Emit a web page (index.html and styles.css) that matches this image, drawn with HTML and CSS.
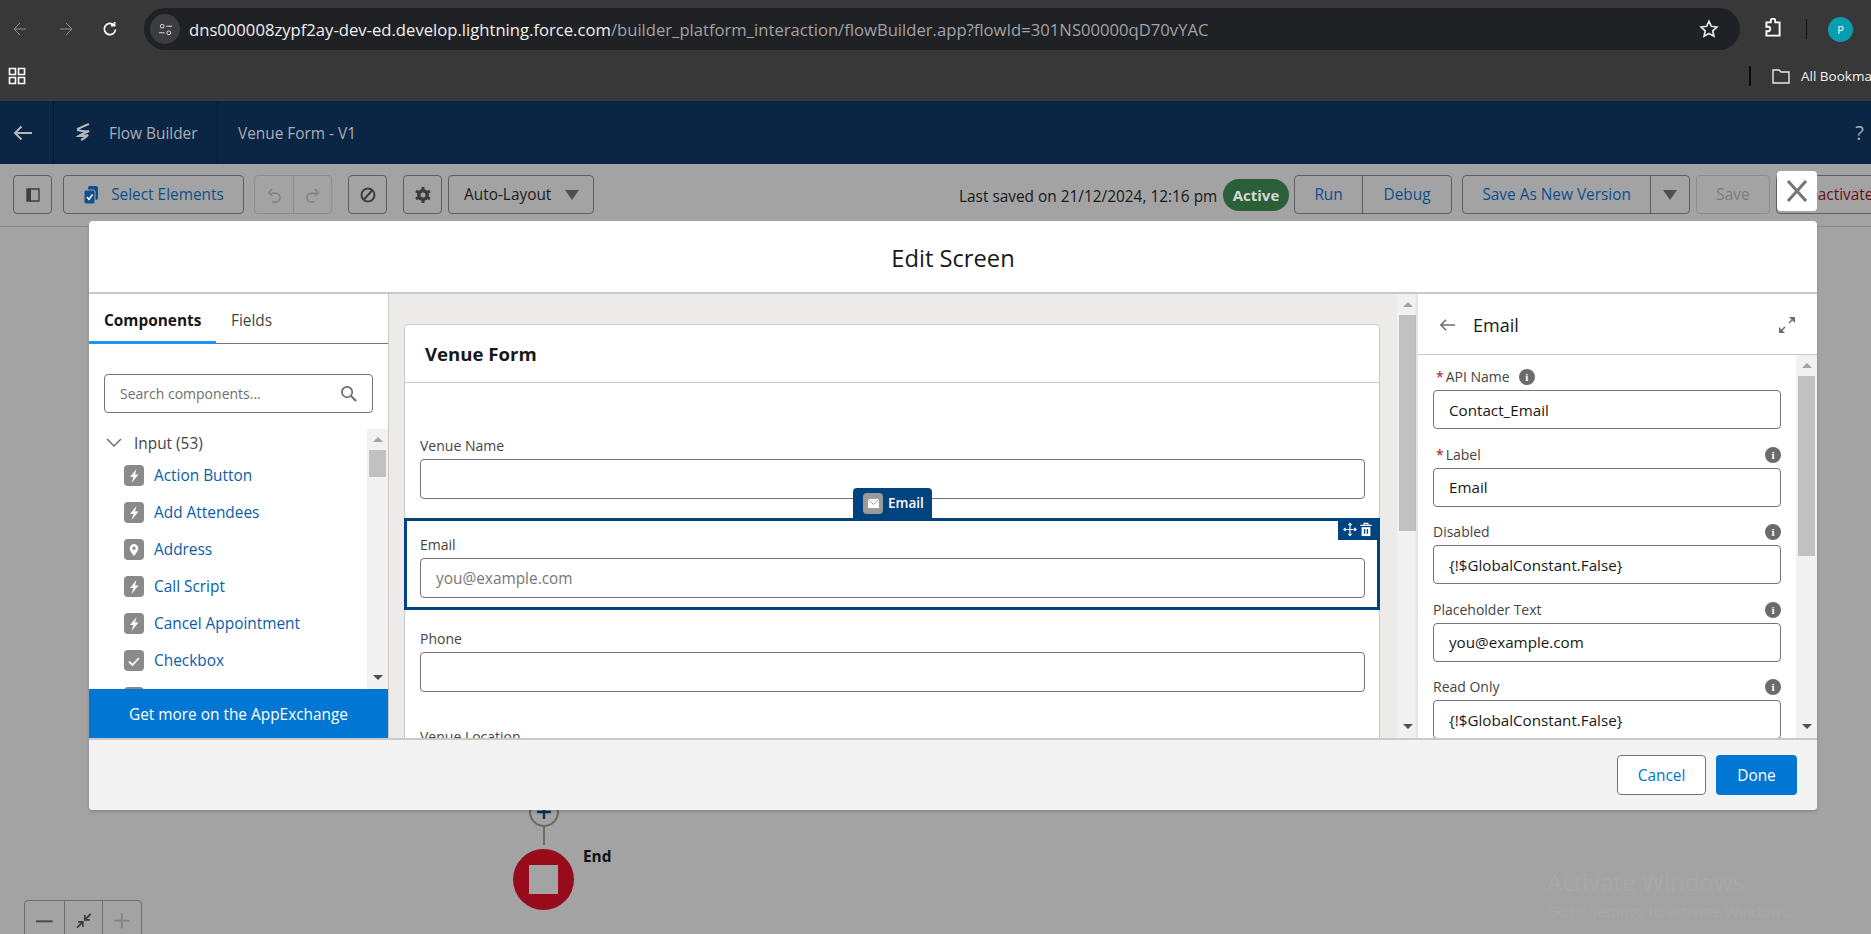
FILE: index.html
```html
<!DOCTYPE html>
<html lang="en">
<head>
    <meta charset="UTF-8">
    <title>Flow Builder - Venue Form</title>
    <link rel="stylesheet" href="styles.css">
</head>
<body>
    <!-- browser chrome -->
    <div class="chrome">
        <div class="address-row">
            <svg class="nav-arrow" viewBox="0 0 16 16"><path d="M14 8H2M8 2 2 8l6 6" stroke="#8f8f8f"/></svg>
            <svg class="nav-arrow forward" viewBox="0 0 16 16"><path d="M2 8h12M8 2l6 6-6 6" stroke="#8f8f8f"/></svg>
            <svg class="nav-arrow reload" viewBox="0 0 16 16"><path d="M13.5 8.5A5.6 5.6 0 1 1 12 4.2M12.6 1v3.6H9" stroke="#fff" stroke-width="1.7"/></svg>
            <div class="address-bar">
                <span class="site-icon">
                    <svg viewBox="0 0 16 16"><circle cx="4.5" cy="4.5" r="2" stroke="#e8e8e8"/><path d="M9 4.5h6M1 11.5h6" stroke="#e8e8e8"/><circle cx="11.5" cy="11.5" r="2" stroke="#e8e8e8"/></svg>
                </span>
                <span class="url"><span class="url-host">dns000008zypf2ay-dev-ed.develop.lightning.force.com</span>/builder_platform_interaction/flowBuilder.app?flowId=301NS00000qD70vYAC</span>
                <svg class="star" viewBox="0 0 18 18"><path d="M9 2l2.100 4.600 5 .6-3.700 3.400 1 4.900L9 13l-4.400 2.500 1-4.900L1.900 7.200l5-.6z" stroke="#e8e8e8" stroke-width="1.500"/></svg>
            </div>
            <svg class="ext-icon" viewBox="0 0 20 20"><path d="M4 4h4V2.500a2 2 0 0 1 4 0V4h4v12H4v-4h1.500a2 2 0 0 0 0-4H4z" stroke="#fff" stroke-width="1.700"/></svg>
            <span class="chrome-sep"></span>
            <span class="avatar">P</span>
        </div>
        <div class="bookmark-row">
            <svg class="apps" viewBox="0 0 18 18"><path d="M1.500 1.500h6v6h-6zM10.500 1.500h6v6h-6zM1.500 10.500h6v6h-6zM10.500 10.500h6v6h-6z" stroke="#fff" stroke-width="1.600"/></svg>
            <span class="bookmark-sep"></span>
            <svg class="folder" viewBox="0 0 20 18"><path d="M2 3h6l2 2h8v11H2z" stroke="#e8e8e8" stroke-width="1.400"/></svg>
            <span class="bookmark-text">All Bookmarks</span>
        </div>
    </div>

    <!-- salesforce header -->
    <div class="app-header">
        <div class="back-cell">
            <svg viewBox="0 0 20 16"><path d="M19 8H2M8.500 1.500 2 8l6.500 6.500" stroke="#b4b8bd" stroke-width="2"/></svg>
        </div>
        <div class="app-cell">
            <svg viewBox="0 0 20 22"><path d="M3 7c4-1 6-3 12-5M3 8c4 1 8 2 12 1-4 2-7 3-10 5 4 0 6 0 9-1-2 2-4 4-7 5" stroke="#b4b8bd" stroke-width="2.200"/></svg>
            <span>Flow Builder</span>
        </div>
        <div class="flow-name">Venue Form - V1</div>
        <div class="help">?</div>
    </div>

    <!-- builder toolbar -->
    <div class="toolbar">
        <button class="tool-btn panel-btn"><svg viewBox="0 0 14 14"><path d="M1 1h12v12H1z" stroke="#3d3d3d" stroke-width="1.400"/><path d="M1 1h4v12H1z" fill="#3d3d3d" stroke="none"/></svg></button>
        <button class="tool-btn select-btn">
            <svg viewBox="0 0 16 20"><rect x="5" y="1" width="10" height="14" rx="2" fill="#0e4f8d" stroke="none"/><rect x="1" y="5" width="11" height="14" rx="2" fill="#0e4f8d" stroke="#a3a3a3"/><path d="M4 12l2 2.500 3.500-5" stroke="#fff" stroke-width="1.500"/></svg>
            Select Elements
        </button>
        <div class="btn-group undo-group">
            <button><svg viewBox="0 0 16 20"><path d="M5 8h5a4.500 4.500 0 0 1 0 10H6M6 3 2 7.500 6 11" stroke="#7f7f7f" stroke-width="1.600"/></svg></button>
            <button><svg viewBox="0 0 16 20"><path d="M11 8H6a4.500 4.500 0 0 0 0 10h4M10 3l4 4.500L10 11" stroke="#7f7f7f" stroke-width="1.600"/></svg></button>
        </div>
        <button class="tool-btn stop-btn"><svg viewBox="0 0 18 18"><circle cx="9" cy="9" r="6.500" stroke="#3d3d3d" stroke-width="2"/><path d="M4.500 14 13.500 4" stroke="#3d3d3d" stroke-width="2"/></svg></button>
        <button class="tool-btn gear-btn"><svg viewBox="0 0 18 18"><path d="M9 1v16M2 5l14 8M2 13 16 5" stroke="#3d3d3d" stroke-width="3"/><circle cx="9" cy="9" r="6" fill="#3d3d3d" stroke="none"/><circle cx="9" cy="9" r="2.500" fill="#a3a3a3" stroke="none"/></svg></button>
        <div class="layout-select">Auto-Layout <span class="caret"></span></div>
        <div class="toolbar-right">
            <span class="saved">Last saved on 21/12/2024, 12:16 pm</span>
            <span class="active-pill">Active</span>
            <div class="btn-group run-group">
                <button class="run">Run</button>
                <button class="debug">Debug</button>
            </div>
            <div class="btn-group save-group">
                <button class="save-new">Save As New Version</button>
                <button class="save-caret"><span class="caret"></span></button>
            </div>
            <button class="save-btn">Save</button>
            <button class="deactivate-btn">Deactivate</button>
        </div>
    </div>

    <!-- flow canvas behind the modal -->
    <div class="canvas">
        <div class="add-node"><svg viewBox="0 0 16 16"><path d="M8 1v14M1 8h14" stroke="#0b3260" stroke-width="2.400"/></svg></div>
        <div class="node-line"></div>
        <div class="end-node"><span></span></div>
        <div class="end-label">End</div>
        <div class="zoom-controls">
            <span><svg viewBox="0 0 16 16"><path d="M0 8h16" stroke="#4d4d4d" stroke-width="2"/></svg></span>
            <span><svg viewBox="0 0 16 16"><path d="M1 15l5-5M2 9h5v5M15 1l-5 5M14 7H9V2" stroke="#3d3d3d" stroke-width="1.800"/></svg></span>
            <span><svg viewBox="0 0 16 16"><path d="M8 0v16M0 8h16" stroke="#868686" stroke-width="2"/></svg></span>
        </div>
        <div class="watermark">
            <div class="wm-title">Activate Windows</div>
            <div class="wm-sub">Go to Settings to activate Windows.</div>
        </div>
    </div>

    <button class="modal-close"><svg viewBox="0 0 24 24"><path d="M3 2l18 20M21 2 3 22" stroke="#747474" stroke-width="3"/></svg></button>

    <!-- edit screen modal -->
    <div class="modal">
        <div class="modal-header">Edit Screen</div>
        <div class="modal-body">

            <div class="left-panel">
                <div class="tabs">
                    <div class="tab active">Components</div>
                    <div class="tab">Fields</div>
                </div>
                <div class="search">
                    <span>Search components...</span>
                    <svg viewBox="0 0 18 18"><circle cx="7.500" cy="7.500" r="5.500" stroke="#6b6b6b" stroke-width="1.800"/><path d="M11.500 11.500 17 17" stroke="#6b6b6b" stroke-width="2.200"/></svg>
                </div>
                <div class="tree">
                    <div class="tree-list">
                        <div class="tree-head">
                            <svg viewBox="0 0 16 10"><path d="M1 1l7 7 7-7" stroke="#706e6b" stroke-width="1.500"/></svg>
                            Input (53)
                        </div>
                        <div class="tree-item"><span class="c-icon"><svg viewBox="0 0 12 14"><path d="M8.500 0 2 8h3.500L3.500 14 10.500 5.500H7z" fill="#fff" stroke="none"/></svg></span>Action Button</div>
                        <div class="tree-item"><span class="c-icon"><svg viewBox="0 0 12 14"><path d="M8.500 0 2 8h3.500L3.500 14 10.500 5.500H7z" fill="#fff" stroke="none"/></svg></span>Add Attendees</div>
                        <div class="tree-item"><span class="c-icon"><svg viewBox="0 0 12 14"><path d="M6 1a4.300 4.300 0 0 0-4.300 4.300C1.700 8.500 6 13 6 13s4.300-4.500 4.300-7.700A4.300 4.300 0 0 0 6 1zm0 6a1.700 1.700 0 1 1 0-3.400A1.700 1.700 0 0 1 6 7z" fill="#fff" stroke="none"/></svg></span>Address</div>
                        <div class="tree-item"><span class="c-icon"><svg viewBox="0 0 12 14"><path d="M8.500 0 2 8h3.500L3.500 14 10.500 5.500H7z" fill="#fff" stroke="none"/></svg></span>Call Script</div>
                        <div class="tree-item"><span class="c-icon"><svg viewBox="0 0 12 14"><path d="M8.500 0 2 8h3.500L3.500 14 10.500 5.500H7z" fill="#fff" stroke="none"/></svg></span>Cancel Appointment</div>
                        <div class="tree-item"><span class="c-icon"><svg viewBox="0 0 12 14"><path d="M1 7.500l3.500 3.500L11 4" stroke="#fff" stroke-width="1.800"/></svg></span>Checkbox</div>
                        <div class="tree-item"><span class="c-icon"></span></div>
                    </div>
                    <div class="scrollbar">
                        <span class="arrow up"></span>
                        <span class="thumb tree-thumb"></span>
                        <span class="arrow down"></span>
                    </div>
                </div>
                <div class="appexchange">Get more on the AppExchange</div>
            </div>

            <div class="center-panel">
                <div class="center-scroll">
                    <div class="form-card">
                        <div class="card-title">Venue Form</div>
                        <div class="card-fields">
                            <div class="screen-field first">
                                <label>Venue Name</label>
                                <input type="text">
                            </div>
                            <div class="screen-field selected">
                                <div class="field-badge">
                                    <span class="badge-icon"><svg viewBox="0 0 14 12"><path d="M1 1h12v10H1z" fill="#fff" stroke="none"/><path d="M1 1.500l6 5.500 6-5.500" stroke="#9a9a9a"/></svg></span>
                                    Email
                                </div>
                                <div class="field-actions">
                                    <svg viewBox="0 0 16 16"><path d="M8 1v14M1 8h14M6.300 3 8 1l1.700 2M6.300 13 8 15l1.700-2M3 6.300 1 8l2 1.700M13 6.300 15 8l-2 1.700" stroke="#fff" stroke-width="1.300"/></svg>
                                    <svg viewBox="0 0 14 16"><path d="M1 3.500h12M5 3.500V1.500h4v2" stroke="#fff" stroke-width="1.300"/><path d="M2.300 5.500h9.400V15H2.300z" fill="#fff" stroke="none"/><path d="M5.500 7.500v5M8.500 7.500v5" stroke="#00437f" stroke-width="1.400"/></svg>
                                </div>
                                <label>Email</label>
                                <input type="text" placeholder="you@example.com">
                            </div>
                            <div class="screen-field">
                                <label>Phone</label>
                                <input type="text">
                            </div>
                            <div class="screen-field last">
                                <label>Venue Location</label>
                            </div>
                        </div>
                    </div>
                </div>
                <div class="scrollbar">
                    <span class="arrow up"></span>
                    <span class="thumb center-thumb"></span>
                    <span class="arrow down"></span>
                </div>
            </div>

            <div class="right-panel">
                <div class="prop-header">
                    <svg class="prop-back" viewBox="0 0 18 14"><path d="M17 7H2M7.500 1.500 2 7l5.500 5.500" stroke="#706e6b" stroke-width="1.700"/></svg>
                    <span>Email</span>
                    <svg class="prop-expand" viewBox="0 0 18 18"><path d="M2 16l5-5M11 7l5-5" stroke="#706e6b" stroke-width="1.500"/><path d="M11 1h6v6zM1 11v6h6z" fill="#706e6b" stroke="none"/></svg>
                </div>
                <div class="prop-body">
                    <div class="prop-fields">
                        <div class="prop-field">
                            <div class="prop-label"><abbr>*</abbr>API Name <span class="info near">i</span></div>
                            <input type="text" value="Contact_Email">
                        </div>
                        <div class="prop-field">
                            <div class="prop-label"><abbr>*</abbr>Label <span class="info">i</span></div>
                            <input type="text" value="Email">
                        </div>
                        <div class="prop-field">
                            <div class="prop-label">Disabled <span class="info">i</span></div>
                            <input type="text" value="{!$GlobalConstant.False}">
                        </div>
                        <div class="prop-field">
                            <div class="prop-label">Placeholder Text <span class="info">i</span></div>
                            <input type="text" value="you@example.com">
                        </div>
                        <div class="prop-field">
                            <div class="prop-label">Read Only <span class="info">i</span></div>
                            <input type="text" value="{!$GlobalConstant.False}">
                        </div>
                    </div>
                    <div class="scrollbar">
                        <span class="arrow up"></span>
                        <span class="thumb prop-thumb"></span>
                        <span class="arrow down"></span>
                    </div>
                </div>
            </div>
        </div>
        <div class="modal-footer">
            <button class="cancel">Cancel</button>
            <button class="done">Done</button>
        </div>
    </div>
</body>
</html>
```

FILE: styles.css
```css
* {
    box-sizing: border-box;
}
html, body {
    margin: 0;
    padding: 0;
}
body {
    width: 1871px;
    height: 934px;
    overflow: hidden;
    position: relative;
    background-color: #a3a3a3;
    font-family: "Open Sans", "Noto Sans", sans-serif;
    font-size: 15.4px;
    color: #181818;
}
svg {
    display: block;
    fill: none;
    flex: none;
}
button {
    font-family: inherit;
    font-size: 15.4px;
    background: none;
    cursor: pointer;
    padding: 0;
}
input {
    font-family: inherit;
    outline: none;
}

/* browser chrome */
.chrome {
    height: 101px;
    background-color: #383838;
}
.address-row {
    height: 58px;
    padding: 8px 0 0 12px;
    display: flex;
    align-items: flex-start;
}
.nav-arrow {
    width: 16px;
    height: 16px;
    margin: 13px 30px 0 0;
}
.forward {
    margin-right: 28px;
}
.reload {
    margin-right: 26px;
}
.address-bar {
    width: 1596px;
    height: 42px;
    background-color: #202124;
    border-radius: 21px;
    display: flex;
    align-items: center;
    padding: 0 21px 0 6px;
}
.site-icon {
    width: 30px;
    height: 30px;
    border-radius: 50%;
    background-color: #3c3d40;
    display: flex;
    align-items: center;
    justify-content: center;
    margin-right: 9px;
}
.site-icon svg {
    width: 15px;
    height: 15px;
}
.url {
    flex: 1;
    font-size: 16.65px;
    color: #a0a2a6;
    white-space: nowrap;
}
.url-host {
    color: #f0f0f0;
}
.star {
    width: 20px;
    height: 20px;
}
.ext-icon {
    width: 22px;
    height: 22px;
    margin: 10px 0 0 22px;
}
.chrome-sep {
    width: 1px;
    height: 20px;
    background-color: #111;
    margin: 11px 21px 0 22px;
}
.avatar {
    width: 25px;
    height: 25px;
    border-radius: 50%;
    background-color: #0a9cb0;
    color: #fff;
    font-size: 11px;
    text-align: center;
    line-height: 25px;
    margin-top: 9px;
}
.bookmark-row {
    height: 43px;
    display: flex;
    align-items: center;
    padding-left: 8px;
    white-space: nowrap;
}
.apps {
    width: 18px;
    height: 18px;
    margin-top: -8px;
}
.bookmark-sep {
    flex: none;
    width: 2px;
    height: 20px;
    background-color: #0c0c0c;
    margin: -8px 0 0 1723px;
}
.folder {
    width: 20px;
    height: 18px;
    margin: -8px 0 0 20px;
}
.bookmark-text {
    flex: none;
    color: #f0f0f0;
    font-size: 13.5px;
    margin: -8px 0 0 10px;
}

/* app header */
.app-header {
    height: 63px;
    background-color: #0b2545;
    color: #a9afb7;
    display: flex;
    align-items: center;
}
.back-cell {
    width: 54px;
    height: 100%;
    border-right: 1px solid #071a33;
    padding: 0 0 0 13px;
    display: flex;
    align-items: center;
}
.back-cell svg {
    width: 20px;
    height: 16px;
}
.app-cell {
    width: 164px;
    height: 100%;
    border-right: 1px solid #071a33;
    display: flex;
    align-items: center;
    padding: 1px 0 0 20px;
    gap: 15px;
}
.app-cell svg {
    width: 20px;
    height: 22px;
}
.flow-name {
    margin: 2px 0 0 20px;
    flex: 1;
}
.help {
    font-size: 20px;
    margin-right: 7px;
}

/* toolbar */
.toolbar {
    height: 63px;
    border-bottom: 1px solid #8a8a8a;
    padding: 11px 0 0 13px;
    display: flex;
    align-items: flex-start;
    white-space: nowrap;
}
.toolbar > * {
    flex: none;
}
.tool-btn {
    width: 39px;
    height: 39px;
    border: 1px solid #5f5f5f;
    border-radius: 4px;
    display: flex;
    align-items: center;
    justify-content: center;
}
.panel-btn svg {
    width: 14px;
    height: 14px;
}
.select-btn {
    width: 181px;
    margin-left: 11px;
    gap: 12px;
    color: #0e4f8d;
}
.select-btn svg {
    width: 16px;
    height: 20px;
}
.btn-group {
    display: flex;
    height: 39px;
    border: 1px solid #5f5f5f;
    border-radius: 4px;
}
.btn-group button {
    border: none;
    border-left: 1px solid #5f5f5f;
    height: 37px;
    color: #0e4f8d;
}
.btn-group button:first-child {
    border-left: none;
}
.undo-group {
    margin-left: 10px;
    width: 78px;
    border-color: #8c8c8c;
}
.undo-group button {
    width: 50%;
    border-color: #8c8c8c;
    display: flex;
    align-items: center;
    justify-content: center;
}
.undo-group svg {
    width: 14px;
    height: 18px;
}
.stop-btn {
    margin-left: 16px;
}
.stop-btn svg, .gear-btn svg {
    width: 18px;
    height: 18px;
}
.gear-btn {
    margin-left: 16px;
}
.layout-select {
    margin-left: 6px;
    width: 146px;
    height: 39px;
    border: 1px solid #5f5f5f;
    border-radius: 4px;
    padding-left: 15px;
    display: flex;
    align-items: center;
    gap: 14px;
    color: #1c1c1c;
}
.caret {
    width: 0;
    height: 0;
    border-left: 7px solid transparent;
    border-right: 7px solid transparent;
    border-top: 10px solid #4f4f4f;
    display: inline-block;
}
.toolbar-right {
    margin-left: 365px;
    display: flex;
    align-items: flex-start;
}
.toolbar-right > * {
    flex: none;
}
.saved {
    line-height: 44px;
    width: 264px;
}
.active-pill {
    width: 66px;
    height: 32px;
    margin-top: 4px;
    border-radius: 16px;
    background-color: #2a5f38;
    color: #d4d8d4;
    font-weight: 700;
    font-size: 15px;
    text-align: center;
    line-height: 32px;
}
.run-group {
    margin-left: 5px;
    width: 158px;
}
.run {
    width: 68px;
}
.debug {
    width: 90px;
}
.save-group {
    margin-left: 10px;
    width: 228px;
}
.save-new {
    width: 189px;
}
.save-caret {
    width: 39px;
    display: flex;
    align-items: center;
    justify-content: center;
}
.save-btn {
    margin-left: 6px;
    width: 74px;
    height: 39px;
    border: 1px solid #8c8c8c;
    border-radius: 4px;
    color: #7c7c7c;
}
.deactivate-btn {
    margin-left: 6px;
    width: 130px;
    height: 39px;
    border: 1px solid #5f5f5f;
    border-radius: 4px;
    color: #6b0f14;
    text-align: left;
    padding-left: 21px;
}

/* canvas, free placed nodes */
.canvas {
    position: relative;
    height: 707px;
}
.add-node {
    position: absolute;
    left: 529px;
    top: 570px;
    width: 30px;
    height: 30px;
    border-radius: 50%;
    border: 2px solid #666;
    display: flex;
    align-items: center;
    justify-content: center;
}
.add-node svg {
    width: 16px;
    height: 16px;
}
.node-line {
    position: absolute;
    left: 543px;
    top: 600px;
    width: 2px;
    height: 18px;
    background-color: #6b6b6b;
}
.end-node {
    position: absolute;
    left: 513px;
    top: 622px;
    width: 61px;
    height: 61px;
    border-radius: 50%;
    background-color: #970b1b;
    display: flex;
    align-items: center;
    justify-content: center;
}
.end-node span {
    width: 29px;
    height: 29px;
    background-color: #a3a3a3;
}
.end-label {
    position: absolute;
    left: 583px;
    top: 619px;
    font-weight: 700;
    color: #111;
}
.zoom-controls {
    position: absolute;
    left: 24px;
    top: 673px;
    display: flex;
    width: 118px;
    height: 50px;
    border: 1px solid #6e6e6e;
    border-radius: 4px;
}
.zoom-controls span {
    width: 39px;
    padding: 12px 11px 0;
    border-left: 1px solid #6e6e6e;
}
.zoom-controls span:first-child {
    border-left: none;
}
.watermark {
    position: absolute;
    left: 1547px;
    top: 638px;
    color: #a8a8a8;
}
.wm-title {
    font-size: 24px;
}
.wm-sub {
    font-size: 15px;
    margin-top: 3px;
}

/* modal */
.modal-close {
    position: absolute;
    left: 1777px;
    top: 171px;
    width: 40px;
    height: 40px;
    background-color: #fff;
    border: none;
    border-radius: 4px;
    z-index: 3;
    display: flex;
    align-items: center;
    justify-content: center;
}
.modal-close svg {
    width: 24px;
    height: 24px;
}
.modal {
    position: absolute;
    left: 89px;
    top: 221px;
    width: 1728px;
    height: 589px;
    background-color: #fff;
    border-radius: 4px;
    box-shadow: 0 2px 3px rgba(0, 0, 0, 0.16);
    display: flex;
    flex-direction: column;
    overflow: hidden;
    z-index: 2;
}
.modal-header {
    height: 73px;
    flex: none;
    border-bottom: 2px solid #c9c9c9;
    font-size: 23.7px;
    text-align: center;
    line-height: 74px;
    color: #181818;
}
.modal-body {
    flex: none;
    height: 444px;
    display: flex;
    overflow: hidden;
}
.modal-footer {
    flex: 1;
    border-top: 2px solid #c9c9c9;
    background-color: #f3f3f3;
    padding: 15px 20px 0 0;
    display: flex;
    justify-content: flex-end;
    align-items: flex-start;
    gap: 10px;
}
.cancel {
    width: 89px;
    height: 40px;
    background-color: #fff;
    border: 1px solid #747474;
    border-radius: 4px;
    color: #0176d3;
}
.done {
    width: 81px;
    height: 40px;
    background-color: #0176d3;
    border: none;
    border-radius: 4px;
    color: #fff;
}

/* left panel */
.left-panel {
    width: 300px;
    flex: none;
    border-right: 1px solid #c9c9c9;
    display: flex;
    flex-direction: column;
}
.tabs {
    height: 50px;
    flex: none;
    border-bottom: 1px solid #747474;
    display: flex;
}
.tab {
    padding: 16px 0 0 15px;
    color: #444;
}
.tab.active {
    width: 127px;
    height: 50px;
    padding-left: 15px;
    border-bottom: 3px solid #1b96ff;
    font-weight: 700;
    color: #181818;
}
.search {
    width: 269px;
    height: 39px;
    flex: none;
    margin: 30px 0 16px 15px;
    border: 1px solid #747474;
    border-radius: 4px;
    padding: 0 15px 0 15px;
    display: flex;
    align-items: center;
    justify-content: space-between;
    color: #706e6b;
    font-size: 14px;
}
.search svg {
    width: 17px;
    height: 17px;
}
.tree {
    height: 260px;
    flex: none;
    display: flex;
    overflow: hidden;
}
.tree-list {
    flex: 1;
    overflow: hidden;
}
.tree-head {
    height: 28px;
    padding-left: 17px;
    display: flex;
    align-items: center;
    gap: 12px;
    color: #444;
}
.tree-head svg {
    width: 16px;
    height: 10px;
}
.tree-item {
    height: 37px;
    padding-left: 35px;
    display: flex;
    align-items: center;
    gap: 10px;
    color: #0b5cab;
}
.c-icon {
    width: 20px;
    height: 21px;
    flex: none;
    border-radius: 4px;
    background-color: #8a8a8a;
    display: flex;
    align-items: center;
    justify-content: center;
}
.c-icon svg {
    width: 12px;
    height: 14px;
}
.appexchange {
    height: 49px;
    flex: none;
    background-color: #0176d3;
    color: #fff;
    text-align: center;
    line-height: 51px;
}

/* scrollbars */
.scrollbar {
    width: 21px;
    flex: none;
    background-color: #f1f1f1;
    display: flex;
    flex-direction: column;
    align-items: center;
    position: relative;
}
.thumb {
    width: 17px;
    background-color: #c1c1c1;
}
.arrow {
    width: 0;
    height: 0;
    border-left: 5px solid transparent;
    border-right: 5px solid transparent;
}
.arrow.up {
    border-bottom: 5px solid #a3a3a3;
    margin: 8px 0;
}
.arrow.down {
    position: absolute;
    bottom: 9px;
    border-top: 5px solid #505050;
}
.tree-thumb {
    height: 27px;
}
.center-thumb {
    height: 216px;
}
.prop-thumb {
    height: 180px;
}

/* center panel */
.center-panel {
    flex: none;
    width: 1029px;
    background-color: #ecebea;
    display: flex;
    overflow: hidden;
    box-shadow: inset -1px 0 0 #c9c9c9;
}
.center-scroll {
    flex: 1;
    padding: 30px 17px 0 15px;
    overflow: hidden;
}
.form-card {
    height: 500px;
    background-color: #fff;
    border: 1px solid #c9c9c9;
    border-radius: 4px 4px 0 0;
}
.card-title {
    height: 58px;
    border-bottom: 1px solid #c9c9c9;
    font-size: 18.6px;
    font-weight: 700;
    line-height: 58px;
    padding-left: 20px;
    color: #181818;
}
.screen-field {
    padding: 0 15px;
    margin-top: 19px;
    position: relative;
}
.screen-field.first {
    margin-top: 53px;
}
.screen-field.last {
    margin-top: 35px;
}
.screen-field label {
    display: block;
    height: 20px;
    line-height: 20px;
    margin-bottom: 3px;
    color: #444;
    font-size: 14px;
}
.screen-field input {
    display: block;
    width: 945px;
    height: 40px;
    border: 1px solid #747474;
    border-radius: 4px;
    padding: 0 15px;
    font-size: 15.4px;
    background-color: #fff;
}
.screen-field input::placeholder {
    color: #777;
    opacity: 1;
}
.screen-field.selected {
    margin-left: -1px;
    margin-right: -1px;
    height: 92px;
    border: 3px solid #00437f;
    padding: 14px 13px 0;
}
.field-badge {
    position: absolute;
    left: 446px;
    top: -33px;
    width: 79px;
    height: 30px;
    background-color: #00437f;
    border-radius: 4px 4px 0 0;
    color: #fff;
    display: flex;
    align-items: center;
    padding-left: 10px;
    gap: 5px;
    font-size: 13.5px;
    font-weight: 600;
}
.badge-icon {
    width: 20px;
    height: 21px;
    border-radius: 4px;
    background-color: #9a9a9a;
    display: flex;
    align-items: center;
    justify-content: center;
}
.badge-icon svg {
    width: 13px;
    height: 11px;
}
.field-actions {
    position: absolute;
    right: -3px;
    top: -3px;
    width: 42px;
    height: 22px;
    background-color: #00437f;
    display: flex;
    align-items: center;
    padding-left: 5px;
    gap: 2px;
}
.field-actions svg {
    width: 14px;
    height: 15px;
}

/* right panel */
.right-panel {
    flex: 1;
    display: flex;
    flex-direction: column;
    box-shadow: -2px 0 2px rgba(0, 0, 0, 0.08);
    z-index: 1;
    background-color: #fff;
}
.prop-header {
    height: 61px;
    flex: none;
    border-bottom: 1px solid #c9c9c9;
    display: flex;
    align-items: center;
    padding: 1px 21px 0;
    font-size: 18px;
}
.prop-back {
    width: 17px;
    height: 14px;
    margin-right: 17px;
}
.prop-header span {
    flex: 1;
}
.prop-expand {
    width: 18px;
    height: 18px;
}
.prop-body {
    flex: 1;
    display: flex;
    overflow: hidden;
}
.prop-fields {
    flex: 1;
    overflow: hidden;
    padding: 12px 15px 0 15px;
}
.prop-field {
    margin-bottom: 15.5px;
}
.prop-label {
    height: 20px;
    line-height: 20px;
    margin-bottom: 3px;
    color: #444;
    display: flex;
    align-items: center;
    font-size: 14px;
}
.prop-label abbr {
    color: #ba0517;
    margin: 0 2px 0 3px;
}
.info {
    width: 16px;
    height: 16px;
    border-radius: 50%;
    background-color: #6b6b6b;
    color: #fff;
    font-size: 11px;
    font-weight: 700;
    font-family: "Liberation Serif", serif;
    text-align: center;
    line-height: 16px;
    margin-left: auto;
}
.info.near {
    margin-left: 9px;
}
.prop-field input {
    display: block;
    width: 348px;
    height: 39px;
    border: 1px solid #747474;
    border-radius: 4px;
    padding: 0 15px;
    font-size: 15.2px;
    color: #181818;
    background-color: #fff;
}
```
